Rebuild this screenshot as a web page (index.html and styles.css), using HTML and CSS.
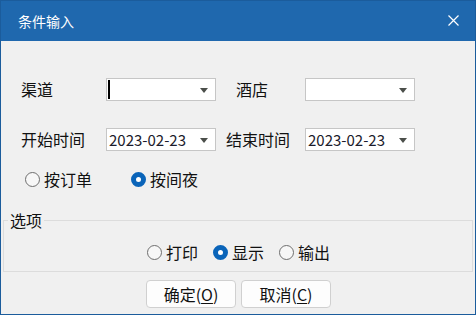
FILE: index.html
```html
<!DOCTYPE html>
<html lang="zh-CN">
<head>
    <meta charset="UTF-8">
    <title>条件输入</title>
    <link rel="stylesheet" href="styles.css">
</head>
<body>
    <div class="window">
        <!-- 标题栏 -->
        <div class="titlebar">
            <span class="title">条件输入</span>
            <span class="close">
                <svg width="11" height="11" viewBox="0 0 11 11">
                    <path d="M0.5 0.5 L10.5 10.5 M10.5 0.5 L0.5 10.5" stroke="#fff" stroke-width="1.2" fill="none"/>
                </svg>
            </span>
        </div>

        <div class="content">
            <!-- 条件 -->
            <div class="form-grid">
                <label class="lbl">渠道</label>
                <div class="combo"><span class="caret"></span><span class="arrow"></span></div>
                <label class="lbl lbl-hotel">酒店</label>
                <div class="combo"><span class="arrow"></span></div>

                <label class="lbl">开始时间</label>
                <div class="combo"><span class="value">2023-02-23</span><span class="arrow"></span></div>
                <label class="lbl lbl-end">结束时间</label>
                <div class="combo"><span class="value">2023-02-23</span><span class="arrow"></span></div>
            </div>

            <div class="radio-row">
                <span class="radio"><i class="dot"></i>按订单</span>
                <span class="radio checked"><i class="dot"></i>按间夜</span>
            </div>

            <!-- 选项 -->
            <fieldset class="options">
                <legend>选项</legend>
                <div class="option-row">
                    <span class="radio"><i class="dot"></i>打印</span>
                    <span class="radio checked"><i class="dot"></i>显示</span>
                    <span class="radio"><i class="dot"></i>输出</span>
                </div>
            </fieldset>

            <div class="buttons">
                <button class="btn">确定(<u>O</u>)</button>
                <button class="btn">取消(<u>C</u>)</button>
            </div>
        </div>
    </div>
</body>
</html>
```

FILE: styles.css
```css
body {
    margin: 0;
    padding: 0;
    background: #f0f0f0;
    font-family: "Noto Sans CJK SC", "Liberation Sans", sans-serif;
    color: #111;
}

.window {
    width: 476px;
    height: 315px;
    box-sizing: border-box;
    border: 1px solid #1b5c9c;
    background: #f0f0f0;
}

.titlebar {
    height: 40px;
    background: #1f68ae;
    display: flex;
    align-items: center;
    justify-content: space-between;
    padding: 0 16px 0 17px;
}

.title {
    color: #fff;
    font-size: 14px;
    line-height: 20px;
}

.close {
    display: flex;
    width: 11px;
    height: 11px;
    margin-top: -1px;
}

.content {
    padding: 37px 2px 0;
}

.form-grid {
    display: grid;
    grid-template-columns: 85px 110px 89px 110px;
    row-gap: 27px;
    margin-left: 18px;
}

.lbl {
    font-size: 16px;
    line-height: 23px;
    height: 23px;
    white-space: nowrap;
}

.lbl-hotel {
    padding-left: 20px;
}

.lbl-end {
    padding-left: 10px;
}

.combo {
    height: 23px;
    box-sizing: border-box;
    border: 1px solid #c6c6c6;
    background: #fff;
    display: flex;
    align-items: center;
    padding-left: 2px;
    position: relative;
}

.caret {
    width: 2px;
    height: 19px;
    background: #000;
    margin-left: -1px;
}

.value {
    font-size: 15px;
    line-height: 21px;
    color: #1b1b2b;
}

.arrow {
    position: absolute;
    right: 7px;
    top: 9px;
    width: 0;
    height: 0;
    border-left: 4.5px solid transparent;
    border-right: 4.5px solid transparent;
    border-top: 5px solid #4b4f4a;
}

.radio-row {
    display: flex;
    gap: 39px;
    margin-top: 18px;
    padding-left: 22px;
}

.radio {
    display: flex;
    align-items: center;
    gap: 4px;
    font-size: 16px;
    line-height: 20px;
    height: 20px;
}

.dot {
    width: 15px;
    height: 15px;
    box-sizing: border-box;
    border: 1px solid #6e6e6e;
    border-radius: 50%;
    background: #f7f7f7;
}

.radio.checked .dot {
    border: 5px solid #0a64b9;
    background: #fff;
}

.options {
    margin: 21px 0 0;
    border: 1px solid #dcdcdc;
    padding: 12px 3px 9px 4px;
}

.options legend {
    font-size: 16px;
    line-height: 20px;
    padding: 0 2px;
}

.option-row {
    display: flex;
    justify-content: center;
    gap: 15px;
}

.buttons {
    display: flex;
    justify-content: center;
    gap: 5px;
    margin-top: 8px;
    padding-left: 1px;
}

.btn {
    width: 90px;
    height: 28px;
    background: #fdfdfd;
    border: 1px solid #d0d0d0;
    border-radius: 4px;
    font-family: "Noto Sans CJK SC", "Liberation Sans", sans-serif;
    font-size: 16px;
    line-height: 20px;
    color: #111;
    padding: 0;
}

.btn u {
    text-underline-offset: 2px;
}
```
